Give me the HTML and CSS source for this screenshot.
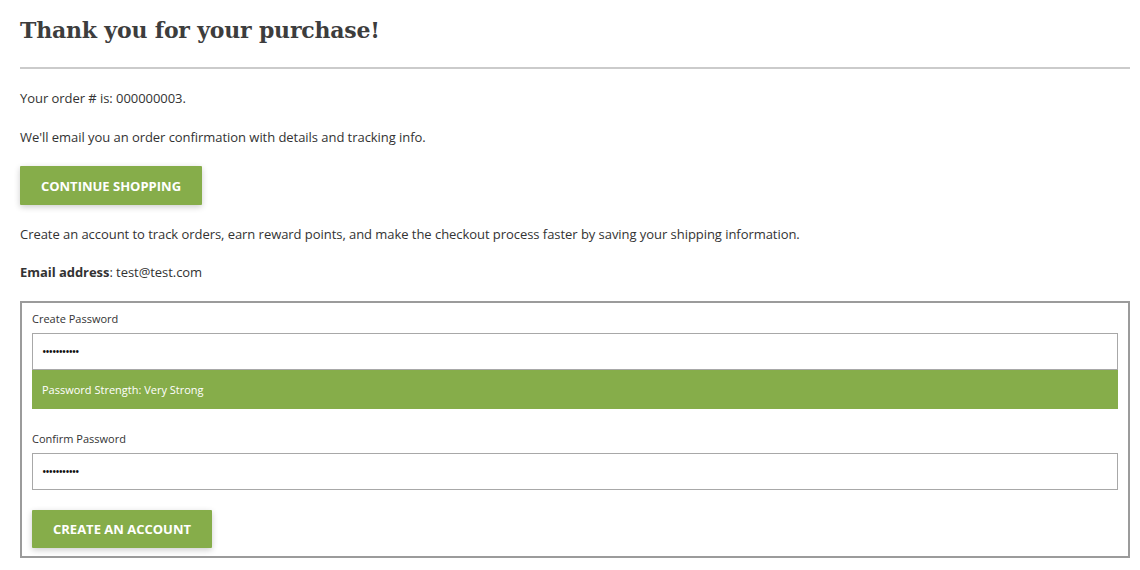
FILE: index.html
```html
<!DOCTYPE html>
<html>
<head>
<meta charset="utf-8">
<link rel="stylesheet" href="styles.css">
</head>
<body>
<main class="page">
  <h1 class="title">Thank you for your purchase!</h1>
  <hr class="divider">
  <p class="text t-order">Your order # is: <span>000000003</span>.</p>
  <p class="text t-email">We'll email you an order confirmation with details and tracking info.</p>
  <button class="btn btn-continue">Continue Shopping</button>
  <p class="text t-create">Create an account to track orders, earn reward points, and make the checkout process faster by saving your shipping information.</p>
  <p class="text t-addr"><strong>Email address</strong>: test@test.com</p>
  <form class="box">
    <label class="label">Create Password</label>
    <div class="input">•••••••••••</div>
    <div class="strength">Password Strength: Very Strong</div>
    <label class="label label-2">Confirm Password</label>
    <div class="input">•••••••••••</div>
    <button type="button" class="btn btn-create">Create an Account</button>
  </form>
</main>
</body>
</html>
```
FILE: styles.css
```css
html, body { margin: 0; padding: 0; background: #fff; }
body { font-family: "Open Sans", "Liberation Sans", sans-serif; color: #333; }
.page { padding: 14px 10px 0 20px; }
.title {
  margin: 0;
  font-family: "DejaVu Serif", "Liberation Serif", serif;
  font-weight: bold;
  font-size: 22px;
  line-height: 32px;
  color: #3d3d3d;
  letter-spacing: -0.2px;
}
.divider { border: 0; border-top: 2px solid #cbcbcb; margin: 21px 0 0; height: 0; }
.text { margin: 0; font-size: 13px; line-height: 20px; letter-spacing: -0.05px; }
.t-order { margin-top: 19px; }
.t-email { margin-top: 19px; }
.t-create { margin-top: 19px; }
.t-addr { margin-top: 18px; }
.btn {
  display: block;
  border: 0;
  background: #86ad4a;
  color: #fff;
  font-family: "Open Sans", sans-serif;
  font-weight: bold;
  font-size: 13px;
  text-transform: uppercase;
  box-shadow: 0 2px 6px rgba(0,0,0,0.2);
  border-radius: 1px;
}
.btn-continue { margin-top: 19px; width: 182px; height: 39px; }
.btn-create { margin-top: 20px; width: 180px; height: 38px; }
.box {
  margin-top: 19px;
  border: 2px solid #9b9b9b;
  padding: 8px 10px 8px 10px;
  display: flex;
  flex-direction: column;
}
.label { font-size: 11px; line-height: 16px; color: #333; }
.label-2 { margin-top: 22px; }
.input {
  margin-top: 6px;
  height: 35px;
  border: 1px solid #a8a8a8;
  display: flex;
  align-items: center;
  padding-left: 9px;
  font-size: 12px;
  letter-spacing: -1.2px;
  color: #111;
}
.strength {
  height: 39px;
  background: #86ad4a;
  color: #fff;
  font-size: 11px;
  display: flex;
  align-items: center;
  padding-left: 10px;
}
```
